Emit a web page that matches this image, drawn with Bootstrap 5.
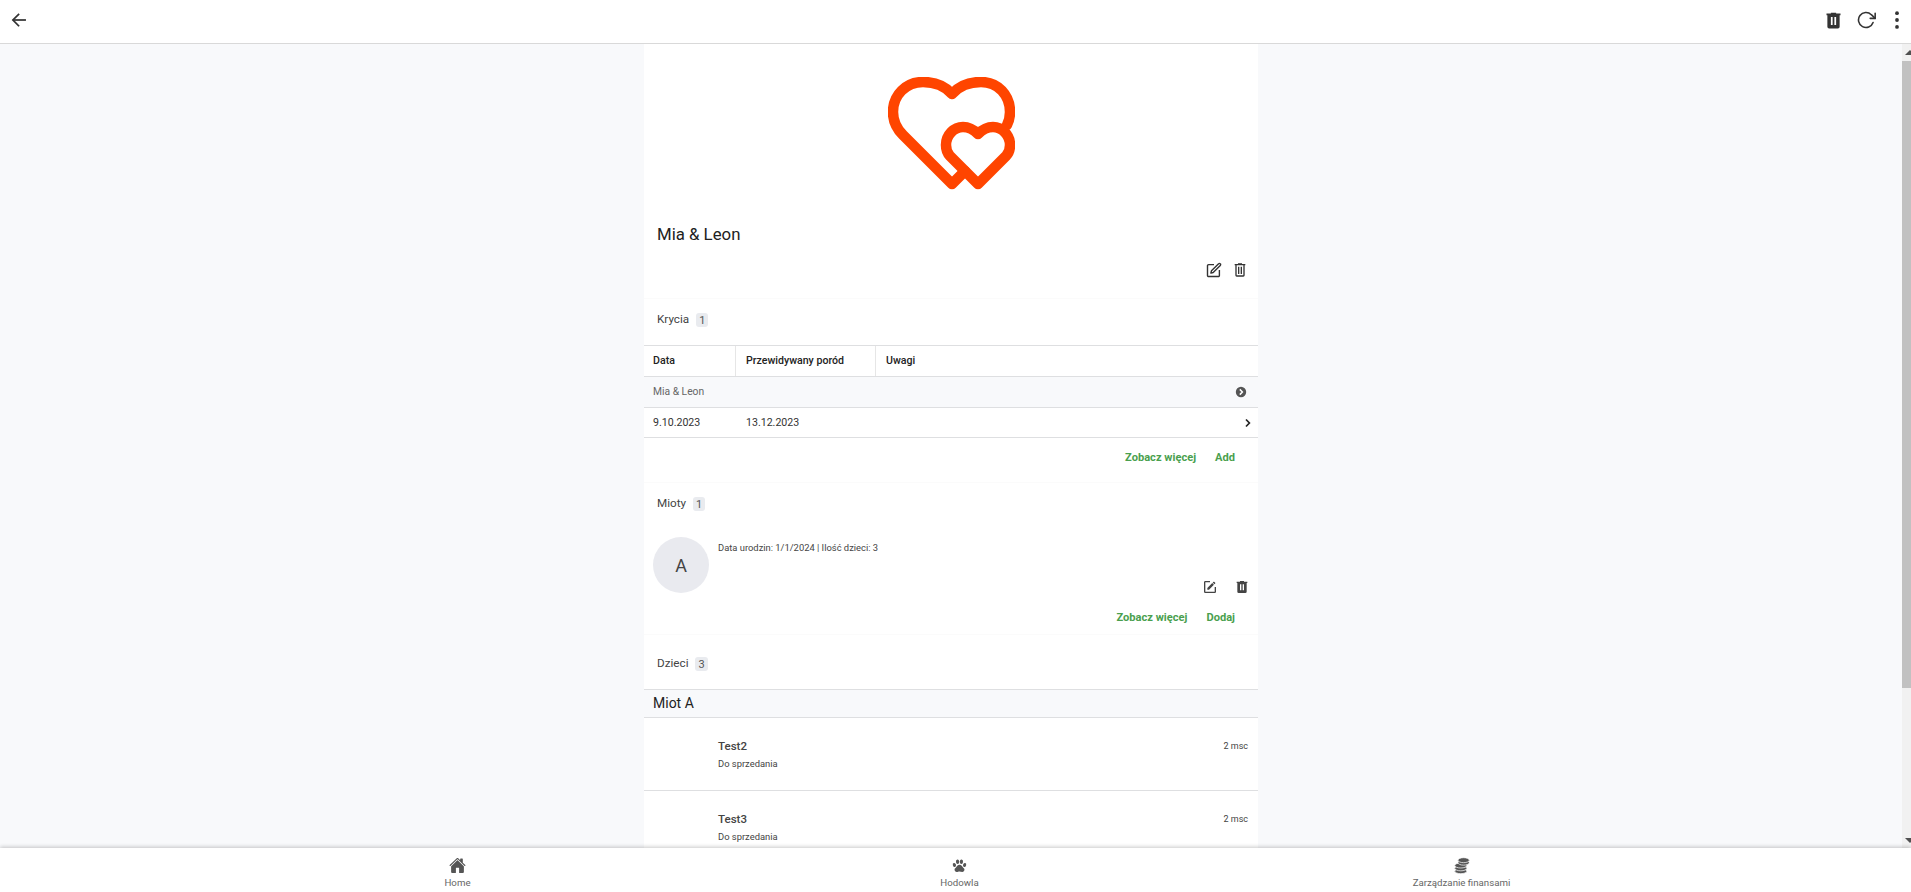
<!doctype html>
<html lang="pl">
<head>
<meta charset="utf-8">
<title>Mia &amp; Leon</title>
<link rel="stylesheet" href="https://cdn.jsdelivr.net/npm/bootstrap@5.3.0/dist/css/bootstrap.min.css">
<style>
html,body{height:100%;overflow:hidden}
body{font-family:Roboto,"Liberation Sans",sans-serif;background:#f8f9fb;color:#222}
svg{display:block}
.topbar{height:44px;background:#fff;border-bottom:1px solid #d9d9d9;padding:0 3px 3px 9px;color:#333;flex:none}
.topbar-actions{gap:10px}
.tb-trash{margin-right:2px}
.midarea{flex:1 1 auto;min-height:0;overflow:hidden}
.scrollpane{flex:1 1 auto;min-width:0;overflow:hidden}
.sheet{width:614px;background:#fff;margin-left:644px}
.rail{width:9px;background:#f1f1f1;flex:none;position:relative;overflow:hidden;padding:17px 0 0}
.rail-thumb{height:627px;background:#c1c1c1}
.rail-up,.rail-down{position:absolute;left:3px;width:0;height:0;border-left:5px solid transparent;border-right:5px solid transparent}
.rail-up{top:6px;border-bottom:5px solid #505050}
.rail-down{bottom:5px;border-top:5px solid #505050}
.hero{height:255px;border-bottom:1px solid #fbfbfb;padding-top:33px}
.hero-name{font-size:16.800px;line-height:24px;margin:32px 0 16px 13px;color:#222}
.hero-actions{gap:10px;padding-right:10px;color:#333}
.sect-head{font-size:11.700px;line-height:16px;color:#444;padding:12px 0 0 13px;gap:7px}
.head-krycia{height:46px}
.head-mioty{height:46px}
.head-dzieci{height:46px}
.cnt{background:#e9ebef;border-radius:3px;font-size:11px;line-height:14px;height:14px;padding:1px 3px 0;color:#555;margin-top:2px}
.krow{border-top:1px solid #dedfe1;font-size:10.600px;color:#333}
.kh{height:31px;font-weight:500;color:#222}
.kh > div{height:100%;display:flex;align-items:center;padding-left:10px}
.kc-a{width:92px;border-right:1px solid #e6e6e6;padding-left:9px!important}
.kc-b{width:140px;border-right:1px solid #e6e6e6}
.kg{height:31px;background:#f8f9fb;color:#666;padding:0 11px 0 9px;font-size:10.300px}
.kd{height:30px;padding:0 6px 0 9px}
.kd-a{width:93px}
.kend{border-top:1px solid #dedfe1}
.linkbar{font-size:11.100px;font-weight:700;color:#4a9f4e;gap:19px;padding-right:23px}
.linkbar-a{height:46px;border-bottom:1px solid #fbfbfb;padding-bottom:4px}
.linkbar-b{height:30px;margin-bottom:8px;border-bottom:1px solid #fbfbfb;padding-bottom:2px}
.litter{height:76px;padding:8px 0 0 9px}
.ava{width:56px;height:56px;border-radius:50%;background:#e9eaef;font-size:18px;color:#444}
.litter-info{font-size:9.400px;color:#444;line-height:14px;padding:4px 0 0 9px}
.litter-actions{gap:16px;color:#444;padding:42px 8px 0 0}
.miot{height:29px;border-top:1px solid #dedfe1;border-bottom:1px solid #dedfe1;background:#f8f9fb;font-size:14px;padding-left:9px;color:#222}
.kid{height:73px;border-bottom:1px solid #dedfe1;padding:20px 10px 0 74px}
.kid-name{font-size:11.500px;line-height:16px;font-weight:500;color:#444}
.kid-age{font-size:9px;line-height:16px;color:#444}
.kid-sub{font-size:9.400px;line-height:14px;color:#444;margin-top:3px}
.botnav{height:44px;background:#fff;box-shadow:0 -1px 4px rgba(0,0,0,.22);flex:none;position:relative;padding-left:8px}
.botitem{width:502px;font-size:9.700px;line-height:14px;color:#666;padding-top:9px}
.botitem svg{margin-bottom:2px;color:#555}
</style>
</head>
<body class="d-flex flex-column">
<header class="topbar d-flex align-items-center justify-content-between">
  <svg width="20" height="20" viewBox="0 0 512 512" fill="none" stroke="currentColor" stroke-width="44" stroke-linecap="square"><polyline points="244 400 100 256 244 112"/><line x1="120" y1="256" x2="412" y2="256"/></svg>
  <div class="topbar-actions d-flex align-items-center">
    <svg class="tb-trash" width="21" height="21" viewBox="0 0 24 24" fill="currentColor"><path d="M9,3V4H4V6H5V19A2,2 0 0,0 7,21H17A2,2 0 0,0 19,19V6H20V4H15V3H9M9,8H11V17H9V8M13,8H15V17H13V8Z"/></svg>
    <svg width="20" height="20" viewBox="0 0 24 24" fill="none" stroke="currentColor" stroke-width="1.900" stroke-linecap="round" stroke-linejoin="round"><polyline points="23 4 23 10 17 10"/><path d="M20.490 15a9 9 0 1 1-2.120-9.360L23 10"/></svg>
    <svg width="22" height="22" viewBox="0 0 512 512" fill="currentColor"><circle cx="256" cy="256" r="44"/><circle cx="256" cy="416" r="44"/><circle cx="256" cy="96" r="44"/></svg>
  </div>
</header>

<div class="midarea d-flex">
  <main class="scrollpane">
    <div class="sheet">
      <section class="hero">
        <div class="d-flex justify-content-center">
          <svg width="127" height="113" viewBox="0 0 127 113" fill="none" stroke="#ff4500" stroke-width="10.500" stroke-linecap="round" stroke-linejoin="round">
            <path d="M77,94 L64,107 L15,58 C8,51 5,43 5,35 C5,18 18,5 35,5 C47,5 57,9 64,17 C71,9 81,5 93,5 C110,5 122,18 122,35 C122,39 121,44 119,48"/>
            <path d="M90,107 L62,79 C59,76 58,72 58,68 C58,58 66,50 75,50 C81,50 86,53 90,57 C94,53 99,50 105,50 C114,50 122,58 122,68 C122,72 121,76 118,79 Z"/>
          </svg>
        </div>
        <div class="hero-name">Mia &amp; Leon</div>
        <div class="hero-actions d-flex justify-content-end">
          <svg width="16" height="16" viewBox="0 0 16 16" fill="none" stroke="currentColor" stroke-width="1.400" stroke-linejoin="round"><path d="M8 2.600H2.600A1.100 1.100 0 0 0 1.500 3.700v9.700a1.100 1.100 0 0 0 1.100 1.100h9.700a1.100 1.100 0 0 0 1.100-1.100V8"/><path d="M5.500 8.800 12.600 1.700a1.100 1.100 0 0 1 1.600 0l.1.100a1.100 1.100 0 0 1 0 1.600L7.200 10.500l-2.300.5z"/></svg>
          <svg width="16" height="16" viewBox="0 0 24 24" fill="currentColor"><path d="M9,2V3H4V5H5V20A2,2 0 0,0 7,22H17A2,2 0 0,0 19,20V5H20V3H15V2H9M7,5H17V20H7V5M9,7V18H11V7H9M13,7V18H15V7H13Z"/></svg>
        </div>
      </section>

      <div class="sect-head head-krycia d-flex align-items-start"><span>Krycia</span><span class="cnt">1</span></div>
      <div class="krow kh d-flex">
        <div class="kc-a">Data</div>
        <div class="kc-b">Przewidywany poród</div>
        <div>Uwagi</div>
      </div>
      <div class="krow kg d-flex align-items-center justify-content-between">
        <span>Mia &amp; Leon</span>
        <svg width="12" height="12" viewBox="0 0 12 12"><circle cx="6" cy="6" r="5.200" fill="#555"/><path d="M4.800 3.400 7.400 6 4.800 8.600" fill="none" stroke="#fff" stroke-width="1.500"/></svg>
      </div>
      <div class="krow kd d-flex align-items-center">
        <span class="kd-a">9.10.2023</span>
        <span class="flex-grow-1">13.12.2023</span>
        <svg width="9" height="10" viewBox="0 0 9 10"><path d="M3 1.500 6.400 5 3 8.500" fill="none" stroke="#222" stroke-width="1.700"/></svg>
      </div>
      <div class="kend linkbar linkbar-a d-flex justify-content-end align-items-center"><span>Zobacz więcej</span><span>Add</span></div>

      <div class="sect-head head-mioty d-flex align-items-start"><span>Mioty</span><span class="cnt">1</span></div>
      <div class="litter d-flex">
        <div class="ava d-flex align-items-center justify-content-center flex-none">A</div>
        <div class="litter-info flex-grow-1">Data urodzin: 1/1/2024 | Ilość dzieci: 3</div>
        <div class="litter-actions d-flex">
          <svg width="16" height="16" viewBox="0 0 24 24" fill="currentColor"><path d="M5,3C3.890,3 3,3.890 3,5V19A2,2 0 0,0 5,21H19A2,2 0 0,0 21,19V12H19V19H5V5H12V3H5M17.780,4C17.610,4 17.430,4.070 17.300,4.200L16.080,5.410L18.580,7.910L19.800,6.700C20.060,6.440 20.060,6 19.800,5.750L18.250,4.200C18.120,4.070 17.950,4 17.780,4M15.370,6.120L8,13.500V16H10.500L17.870,8.620L15.370,6.120Z"/></svg>
          <svg width="16" height="16" viewBox="0 0 24 24" fill="currentColor"><path d="M9,3V4H4V6H5V19A2,2 0 0,0 7,21H17A2,2 0 0,0 19,19V6H20V4H15V3H9M9,8H11V17H9V8M13,8H15V17H13V8Z"/></svg>
        </div>
      </div>
      <div class="linkbar linkbar-b d-flex justify-content-end align-items-center"><span>Zobacz więcej</span><span>Dodaj</span></div>

      <div class="sect-head head-dzieci d-flex align-items-start"><span>Dzieci</span><span class="cnt">3</span></div>
      <div class="miot d-flex align-items-center">Miot A</div>
      <div class="kid">
        <div class="d-flex justify-content-between"><span class="kid-name">Test2</span><span class="kid-age">2 msc</span></div>
        <div class="kid-sub">Do sprzedania</div>
      </div>
      <div class="kid">
        <div class="d-flex justify-content-between"><span class="kid-name">Test3</span><span class="kid-age">2 msc</span></div>
        <div class="kid-sub">Do sprzedania</div>
      </div>
    </div>
  </main>
  <div class="rail" aria-hidden="true">
    <span class="rail-up"></span>
    <div class="rail-thumb"></div>
    <span class="rail-down"></span>
  </div>
</div>

<nav class="botnav d-flex justify-content-center">
  <div class="botitem d-flex flex-column align-items-center">
    <svg width="17" height="17" viewBox="0 0 512 512" fill="currentColor"><path d="M261.56,101.28a8,8,0,0,0-11.06,0L66.4,277.15a8,8,0,0,0-2.47,5.79L63.9,448a32,32,0,0,0,32,32H192a16,16,0,0,0,16-16V328a8,8,0,0,1,8-8h80a8,8,0,0,1,8,8V464a16,16,0,0,0,16,16h96.06a32,32,0,0,0,32-32V282.94a8,8,0,0,0-2.47-5.79Z"/><path d="M490.91,244.15l-74.8-71.56V64a16,16,0,0,0-16-16h-48a16,16,0,0,0-16,16V96L278.19,40.62C272.77,35.14,264.71,32,256,32h0c-8.68,0-16.72,3.14-22.14,8.63L21.16,244.13c-6.2,6-7,15.87-1.35,22.32a16,16,0,0,0,23.18,1.06L250.5,69.28a8,8,0,0,1,11.06,0L469.08,267.51a16,16,0,0,0,22.59-.44C497.81,260.76,497.38,250.42,490.91,244.15Z"/></svg>
    <span>Home</span>
  </div>
  <div class="botitem d-flex flex-column align-items-center">
    <svg width="17" height="17" viewBox="0 0 24 24" fill="currentColor"><ellipse cx="4.800" cy="11.200" rx="2.200" ry="2.900" transform="rotate(-18 4.800 11.200)"/><ellipse cx="9.300" cy="6.700" rx="2.300" ry="3.100" transform="rotate(-6 9.300 6.700)"/><ellipse cx="14.700" cy="6.700" rx="2.300" ry="3.100" transform="rotate(6 14.700 6.700)"/><ellipse cx="19.200" cy="11.200" rx="2.200" ry="2.900" transform="rotate(18 19.200 11.200)"/><path d="M12 11c-2.400 0-3.500 1.700-4.500 3.200-.9 1.300-2.500 2-2.500 3.800 0 1.700 1.400 3 3 3 1.600 0 2.600-.7 4-.7s2.400.7 4 .7c1.600 0 3-1.300 3-3 0-1.800-1.600-2.500-2.500-3.800C15.500 12.700 14.400 11 12 11z"/></svg>
    <span>Hodowla</span>
  </div>
  <div class="botitem d-flex flex-column align-items-center">
    <svg width="17" height="17" viewBox="0 0 24 24" fill="currentColor" stroke="#fff" stroke-width="1"><ellipse cx="11" cy="20" rx="8.500" ry="3.500"/><ellipse cx="11" cy="16" rx="8.500" ry="3.500"/><ellipse cx="11" cy="12" rx="8.500" ry="3.500"/><ellipse cx="15" cy="8" rx="8" ry="3.500"/><ellipse cx="15" cy="4.500" rx="8" ry="3.500"/></svg>
    <span>Zarządzanie finansami</span>
  </div>
</nav>
<script src="https://cdn.jsdelivr.net/npm/bootstrap@5.3.0/dist/js/bootstrap.bundle.min.js"></script>
</body>
</html>
